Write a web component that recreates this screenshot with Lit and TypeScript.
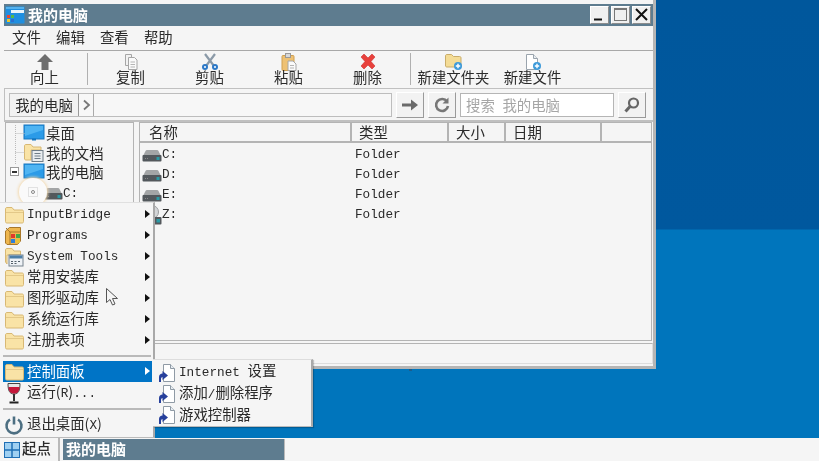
import { LitElement, html, css, svg, nothing } from "lit";
import { customElement } from "lit/decorators.js";

const svgIcon = (w: number, h: number, body: unknown) =>
  html`<svg class="ico" width=${w} height=${h} viewBox="0 0 ${w} ${h}">${body}</svg>`;

const folder = () =>
  svgIcon(21, 18, svg`<path d="M2.500 15.500V3c0-1 .5-1.500 1.500-1.500h5l2 2.500h8c1 0 1.500.5 1.500 1.500v10c0 1-.5 1.500-1.500 1.500H4c-1 0-1.500-.5-1.500-1.500z" fill="#f9e3a6" stroke="#d8b874"/><path d="M3 6.500h17" stroke="#e3c888"/>`);

const programs = () =>
  svgIcon(21, 20, svg`<path d="M2.500 17V5l4-3.500h11V15l-3 3.500H4z" fill="#eeb64e" stroke="#a8782a"/><path d="M7 6h11M7 6v12M7 6L3 2" stroke="#a8782a" fill="none"/><rect x="8" y="8" width="4" height="4" fill="#e03a2c"/><rect x="13" y="8" width="4" height="4" fill="#45a845"/><rect x="8" y="13" width="4" height="4" fill="#2f7fd6"/><rect x="13" y="13" width="4" height="4" fill="#e9c23a"/>`);

const sysTools = () =>
  svgIcon(21, 20, svg`<path d="M2.500 15V3c0-1 .5-1.500 1.500-1.500h5l2 2.500h6.500v4H4v9z" fill="#f9e3a6" stroke="#d8b874"/><rect x="6" y="8" width="14" height="11" fill="#eef2f6" stroke="#77838e"/><rect x="6.500" y="8.500" width="13" height="3" fill="#4d7fa8"/><path d="M8 14.500h2M11.500 14.500h2M15 14.500h2M8 16.500h2M11.500 16.500h2" stroke="#55606a"/>`);

const monitor = () =>
  svgIcon(22, 18, svg`<rect x="1" y="1" width="20" height="14" fill="#2b9be8" stroke="#1677c0"/><path d="M2 2h18v4L2 12z" fill="#4fb4f2"/><path d="M9 15.500h4" stroke="#1677c0" stroke-width="2"/>`);

const docFolder = () =>
  svgIcon(22, 20, svg`<path d="M1.500 16V3c0-1 .5-1.500 1.500-1.500h5l2 2.500h8v3H8v10H3c-1 0-1.500-.5-1.500-1.500z" fill="#f9e3a6" stroke="#d8b874"/><rect x="9" y="7.500" width="11" height="11" fill="#e9edf0" stroke="#6f7d88"/><path d="M11.500 10.500h6M11.500 13h6M11.500 15.500h6" stroke="#6f7d88"/>`);

const drive = () =>
  svgIcon(20, 13, svg`<path d="M1 7l2.500-5c.3-.6.8-1 1.500-1h10c.7 0 1.200.4 1.500 1L19 7z" fill="#a3a5a6"/><rect x="0.500" y="6" width="19" height="6.500" rx="1" fill="#53585c"/><rect x="14.500" y="8" width="3" height="3" fill="#2a9aa5"/><path d="M3 9.500h1M5 9.500h1" stroke="#888"/>`);

const cdDrive = () =>
  svgIcon(20, 20, svg`<circle cx="10" cy="7" r="6.500" fill="#d4d6d8" stroke="#9a9c9e"/><circle cx="10" cy="7" r="2" fill="#f5f5f5" stroke="#9a9c9e"/><rect x="4.500" y="12" width="15" height="7.500" rx="1" fill="#53585c"/><rect x="14.500" y="14" width="3.500" height="3.500" fill="#2a9aa5"/>`);

const shortcutDoc = () =>
  svgIcon(18, 20, svg`<path d="M5.500 1.500h7l4 4v13h-11z" fill="#fff" stroke="#8f9aa5"/><path d="M12.500 1.500v4h4" fill="#e8edf2" stroke="#8f9aa5"/><path d="M1 19v-5c0-2 1.500-3.500 3.500-3.500V8l5.500 4.500L4.500 17v-3c-1 0-1.500 1-1.500 2v3z" fill="#27409c"/>`);

const plusBadge = () => svg`<circle cx="14" cy="13" r="4" fill="#3d9ad9"/><path d="M14 10.800v4.400M11.800 13h4.400" stroke="#fff" stroke-width="1.400"/>`;

const TOOL_ICONS: Record<string, () => unknown> = {
  up: () => svgIcon(20, 18, svg`<path d="M10 1L2 9h4.500v8h7V9H18z" fill="#6e6e6e"/>`),
  copy: () => svgIcon(20, 18, svg`<path d="M4.500 1.500h6v11h-6z" fill="#f2f2f2" stroke="#a6a6a6"/><path d="M7.500 4.500h6l2.500 2.500v9.500H7.500z" fill="#fafafa" stroke="#a6a6a6"/><path d="M9.500 9h4.500M9.500 11.500h4.500M9.500 14h4.500" stroke="#b5b5b5"/>`),
  cut: () => svgIcon(20, 18, svg`<path d="M5 1l9 12M15 1L6 13" stroke="#8b9aa8" stroke-width="2.200"/><circle cx="5" cy="14" r="3" fill="#2d79c7"/><circle cx="15" cy="14" r="3" fill="#2d79c7"/><circle cx="5" cy="14" r="1" fill="#fff"/><circle cx="15" cy="14" r="1" fill="#fff"/>`),
  paste: () => svgIcon(20, 18, svg`<rect x="3" y="2.500" width="12" height="15" rx="1" fill="#eec173" stroke="#cf9f50"/><rect x="6.500" y="0.500" width="5" height="4" fill="#d9d9d9" stroke="#999"/><path d="M9 8h5l3 3v6.500H9z" fill="#fafafa" stroke="#a6a6a6"/><path d="M11 12.500h4M11 15h4" stroke="#b5b5b5"/>`),
  del: () => svgIcon(20, 18, svg`<path d="M3 4l3-3 4 4 4-4 3 3-4 4.500 4 4.500-3 3-4-4-4 4-3-3 4-4.500z" fill="#e8413c" stroke="#c33" stroke-width=".6"/>`),
  newfolder: () => svgIcon(20, 18, svg`<path d="M1.500 13V3c0-1 .5-1.500 1.500-1.500h4.500l2 2h6c1 0 1.500.5 1.500 1.500v7.500c0 1-.5 1.500-1.500 1.500H3c-1 0-1.500-.5-1.500-1.500z" fill="#f4dc96" stroke="#c9ad6a"/>${plusBadge()}`),
  newfile: () => svgIcon(20, 18, svg`<path d="M3.500 1.500h7l4 4v11h-11z" fill="#fff" stroke="#9aa4ad"/><path d="M10.500 1.500v4h4" fill="#e8edf2" stroke="#9aa4ad"/>${plusBadge()}`),
};

const wine = () =>
  svgIcon(21, 22, svg`<path d="M5 1.500h12c0 7-1.500 10.500-6 10.500S5 8.500 5 1.500z" fill="#e6e6e6" stroke="#444"/><path d="M5.500 5h11c-.2 4.500-2 6.500-5.500 6.500S5.700 9.500 5.500 5z" fill="#c4183a"/><path d="M11 12v7" stroke="#333" stroke-width="2"/><path d="M6.500 20.500h9" stroke="#222" stroke-width="2"/>`);

const power = () =>
  svgIcon(21, 20, svg`<path d="M7 4.500a7.500 7.500 0 1 0 8 0" fill="none" stroke="#4d6f82" stroke-width="2.600"/><path d="M11 1.500v8" stroke="#4d6f82" stroke-width="2.600"/>`);

const startLogo = () =>
  svgIcon(16, 16, svg`<rect x=".5" y=".5" width="15" height="15" fill="#9fd0f2" stroke="#1f6fb5"/><path d="M8 1v14M1 8h14" stroke="#1f6fb5" stroke-width="1.500"/>`);

const titleIcon = () =>
  svgIcon(20, 18, svg`<rect x=".5" y=".5" width="19" height="17" fill="#1f8fe0"/><path d="M6 4h13v3H6z" fill="#e9f4fb"/><path d="M1 1h18v2H1z" fill="#55b2ee"/><rect x="2" y="9" width="3" height="3" fill="#e9452f"/><rect x="6" y="9" width="3" height="3" fill="#58b947"/><rect x="2" y="13" width="3" height="3" fill="#e8c52e"/><rect x="6" y="13" width="3" height="3" fill="#2b6fcf"/>`);

const TOOLS = [
  { id: "up", label: "向上" },
  { sep: true },
  { id: "copy", label: "复制" },
  { id: "cut", label: "剪贴" },
  { id: "paste", label: "粘贴" },
  { id: "del", label: "删除" },
  { sep: true },
  { id: "newfolder", label: "新建文件夹" },
  { id: "newfile", label: "新建文件" },
];

const COLUMNS = [
  { label: "名称", w: 212 },
  { label: "类型", w: 97 },
  { label: "大小", w: 57 },
  { label: "日期", w: 96 },
  { label: "", w: 49 },
];

const ROWS = ["C:", "D:", "E:", "Z:"];

const MENU = [
  { icon: folder, label: "InputBridge", latin: true, arrow: true },
  { icon: programs, label: "Programs", latin: true, arrow: true },
  { icon: sysTools, label: "System Tools", latin: true, arrow: true },
  { icon: folder, label: "常用安装库", arrow: true },
  { icon: folder, label: "图形驱动库", arrow: true },
  { icon: folder, label: "系统运行库", arrow: true },
  { icon: folder, label: "注册表项", arrow: true },
];

@customElement("app-root")
export class AppRoot extends LitElement {
  static styles = css`
    :host {
      display: block;
      width: 819px;
      height: 461px;
      overflow: hidden;
      font-family: "Noto Sans CJK SC", "Liberation Sans", sans-serif;
      font-size: 14.400px;
      color: #2a2a2a;
    }
    .ico { display: block; flex: none; }
    .lat { font-family: "Liberation Mono", monospace; font-size: 12.700px; }
    .screen {
      position: relative;
      width: 819px;
      height: 461px;
      display: flex;
      flex-direction: column;
      background: #f5f5f5;
      filter: blur(0.35px);
    }
    .desktop {
      flex: none;
      height: 438px;
      background: linear-gradient(#00579c 0, #00589e 229px, #0075bc 230px, #0075bc 100%);
    }
    .speck {
      position: absolute;
      left: 409px;
      top: 369px;
      width: 3px;
      height: 2px;
      background: #1d5c8c;
    }

    .win {
      position: absolute;
      left: 0;
      top: 0;
      width: 656px;
      height: 369px;
      box-sizing: border-box;
      background: #f5f5f5;
      padding: 4px 0 0 4px;
      border-right: 3px solid #b5b5b5;
      border-bottom: 3px solid #b5b5b5;
      display: flex;
      flex-direction: column;
    }
    .title {
      flex: none;
      height: 22px;
      width: 649px;
      background: #5e7c8f;
      display: flex;
      align-items: center;
      padding-left: 1px;
      box-sizing: border-box;
      color: #fff;
      font-weight: 700;
      gap: 3px;
      font-size: 15px;
    }
    .title-text { flex: 1; line-height: 20px; }
    .wbtns { display: flex; gap: 2px; padding-right: 2px; }
    .wbtn {
      width: 19px;
      height: 18px;
      background: #f0f0f0;
      border: 1px solid;
      border-color: #fff #8c8c8c #8c8c8c #fff;
      box-sizing: border-box;
    }
    .menubar {
      flex: none;
      height: 25px;
      width: 649px;
      display: flex;
      align-items: center;
      gap: 15.200px;
      padding: 0 0 2px 8px;
      box-sizing: border-box;
      border-bottom: 1px solid #a8a8a8;
    }
    .menubar span { line-height: 18px; }
    .toolbar {
      flex: none;
      height: 37px;
      display: flex;
      align-items: flex-start;
      padding: 2px 0 0 1px;
      box-sizing: border-box;
    }
    .tool {
      width: 79px;
      flex: none;
      display: flex;
      flex-direction: column;
      align-items: center;
    }
    .tool span { line-height: 16px; margin-top: -2px; white-space: nowrap; }
    .tsep {
      width: 7px;
      flex: none;
      height: 32px;
      display: flex;
      justify-content: center;
    }
    .tsep i { display: block; width: 1px; height: 100%; background: #b0b0b0; margin-left: -1px; }
    .addr {
      flex: none;
      width: 649px;
      height: 34px;
      box-sizing: border-box;
      border: 1px solid #c0c0c0;
      border-width: 1px 0 2px 1px;
      display: flex;
      align-items: center;
      padding-left: 4px;
      gap: 4px;
    }
    .crumbs {
      width: 383px;
      height: 24px;
      flex: none;
      box-sizing: border-box;
      border: 1px solid #bdbdbd;
      background: #f7f7f7;
      display: flex;
    }
    .crumb {
      width: 69px;
      box-sizing: border-box;
      border-right: 1px solid #999;
      text-align: center;
      line-height: 22px;
      background: #f2f2f2;
      white-space: nowrap;
    }
    .crumb-arrow {
      width: 15px;
      box-sizing: border-box;
      border-right: 1px solid #aaa;
      display: flex;
      align-items: center;
      justify-content: center;
    }
    .abtn {
      width: 28px;
      height: 26px;
      flex: none;
      box-sizing: border-box;
      border: 1px solid;
      border-color: #fff #9a9a9a #9a9a9a #fff;
      background: #f2f2f2;
      display: flex;
      align-items: center;
      justify-content: center;
    }
    .search {
      width: 154px;
      height: 24px;
      flex: none;
      box-sizing: border-box;
      border: 1px solid #b5b5b5;
      background: #fff;
      color: #a6a6a6;
      padding-left: 5px;
      line-height: 22px;
      white-space: pre;
    }
    .panels {
      flex: none;
      height: 219px;
      display: flex;
      padding-left: 1px;
      gap: 5px;
    }
    .tree {
      width: 129px;
      flex: none;
      box-sizing: border-box;
      border: 1px solid #b4b4b4;
      position: relative;
      padding-top: 0.500px;
    }
    .tree-row {
      height: 19.500px;
      display: flex;
      align-items: center;
      padding-left: 17px;
      gap: 1px;
      white-space: nowrap;
    }
    .tree-row span { line-height: 18px; }
    .tree-row.drive-row { padding-left: 37px; gap: 0; margin-top: 2px; }
    .dots { position: absolute; left: 0; top: 0; }
    .expander {
      position: absolute;
      left: 4px;
      top: 44px;
      width: 9px;
      height: 9px;
      box-sizing: border-box;
      border: 1px solid #999;
      background: #fff;
      display: flex;
      align-items: center;
      justify-content: center;
    }
    .expander i { display: block; width: 5px; height: 2px; background: #333; }
    .ripple {
      position: absolute;
      left: 19px;
      top: 178px;
      width: 28px;
      height: 28px;
      box-sizing: border-box;
      border-radius: 50%;
      background: #fafafa;
      box-shadow: 0 0 3px 1px #f3d9ae;
      display: flex;
      align-items: center;
      justify-content: center;
    }
    .ripple i {
      display: block;
      width: 10px;
      height: 10px;
      box-sizing: border-box;
      border: 1px solid #e2e2e2;
      position: relative;
    }
    .ripple i::after {
      content: "";
      position: absolute;
      left: 2px;
      top: 2px;
      width: 4px;
      height: 4px;
      box-sizing: border-box;
      border: 1px solid #888;
      border-radius: 50%;
    }
    .list {
      width: 513px;
      flex: none;
      box-sizing: border-box;
      border: 1px solid #b4b4b4;
      display: flex;
      flex-direction: column;
    }
    .lhead {
      display: flex;
      height: 18px;
      flex: none;
      border-bottom: 2px solid #b4b4b4;
    }
    .lhead div {
      box-sizing: border-box;
      border-right: 2px solid #b4b4b4;
      padding-left: 7px;
      line-height: 17px;
    }
    .lhead div:first-child { padding-left: 9px; }
    .lhead div:last-child { border-right: 0; }
    .lrows { padding-top: 2px; }
    .lrow {
      height: 20px;
      display: flex;
      align-items: center;
    }
    .lrow .name { width: 212px; display: flex; align-items: center; padding-left: 2px; box-sizing: border-box; }
    .lrow .lat { display: block; line-height: 20px; }
    .lrow .kind { padding-left: 3px; }

    .status {
      flex: none;
      width: 648px;
      height: 21px;
      margin: 2px 0 0 1px;
      box-sizing: border-box;
      border-top: 1px solid #b4b4b4;
      border-right: 1px solid #ddd;
      border-bottom: 1px solid #ddd;
    }

    .menu {
      position: absolute;
      background: #f5f5f5;
      box-sizing: border-box;
      border-right: 2px solid #a9a9a9;
      border-bottom: 1px solid #bbb;
    }
    .start {
      left: 0;
      top: 202px;
      width: 155px;
      height: 236px;
      padding: 1px 1px 0 3px;
      border-top: 1px solid #e0e0e0;
    }
    .submenu {
      left: 153px;
      top: 359px;
      width: 160px;
      height: 68px;
      padding: 2px 2px 0 5px;
      box-shadow: 1px 1px 1px #0003;
      border-top: 1px solid #ddd;
    }
    .mi {
      height: 21px;
      display: flex;
      align-items: center;
      gap: 3px;
      position: relative;
      white-space: pre;
    }
    .mi > span { line-height: 18px; margin-bottom: 3px; }
    .mi > span.lat { margin-bottom: 0; }
    .mi.low > span { margin-bottom: 1px; }
    .mi.sel { background: #0074c6; color: #fff; }
    .arrow {
      position: absolute;
      right: 2px;
      top: 6px;
      width: 0;
      height: 0;
      border-left: 5px solid #111;
      border-top: 4.500px solid transparent;
      border-bottom: 4.500px solid transparent;
    }
    .sel .arrow { border-left-color: #fff; }
    .msep { height: 2px; background: #b9b9b9; margin: 4px 1px 4px 0; }
    .msep.after { margin: 5px 1px 4px 0; }
    .cursor { position: absolute; left: 105px; top: 287px; }

    .taskbar {
      flex: none;
      height: 23px;
      display: flex;
      align-items: stretch;
    }
    .startbtn {
      width: 60px;
      box-sizing: border-box;
      display: flex;
      align-items: center;
      gap: 2px;
      padding-left: 4px;
      border-right: 2px solid #b9b9b9;
      font-weight: 500;
    }
    .startbtn span { line-height: 18px; margin-bottom: 3px; }
    .task {
      width: 222px;
      margin: 1px 0 1px 3px;
      background: #5e7c8f;
      color: #fff;
      font-weight: 700;
      font-size: 15px;
      line-height: 19px;
      padding-left: 3px;
      box-sizing: border-box;
      border-right: 1px solid #b9b9b9;
    }
  `;

  private txt(s: string) {
    return html`<span class="lat">${s}</span>`;
  }

  private renderWindow() {
    return html`<section class="win">
      <div class="title">
        ${titleIcon()}<span class="title-text">我的电脑</span>
        <div class="wbtns">
          <div class="wbtn">${svgIcon(17, 16, svg`<path d="M3 12.500h8" stroke="#111" stroke-width="2"/>`)}</div>
          <div class="wbtn">${svgIcon(17, 16, svg`<rect x="2.500" y="1.500" width="12" height="12" fill="none" stroke="#777"/><path d="M2.500 2h12" stroke="#777" stroke-width="2"/>`)}</div>
          <div class="wbtn">${svgIcon(17, 16, svg`<path d="M3 2l11 11M14 2L3 13" stroke="#111" stroke-width="2"/>`)}</div>
        </div>
      </div>
      <div class="menubar">
        <span>文件</span><span>编辑</span><span>查看</span><span>帮助</span>
      </div>
      <div class="toolbar">
        ${TOOLS.map((t) =>
          t.sep
            ? html`<div class="tsep"><i></i></div>`
            : html`<div class="tool">${TOOL_ICONS[t.id!]()}<span>${t.label}</span></div>`
        )}
      </div>
      <div class="addr">
        <div class="crumbs">
          <div class="crumb">我的电脑</div>
          <div class="crumb-arrow">${svgIcon(9, 12, svg`<path d="M2 1.500L7 6l-5 4.500" fill="none" stroke="#777" stroke-width="1.800"/>`)}</div>
        </div>
        <div class="abtn">${svgIcon(18, 16, svg`<path d="M1 6.500h9V2.500l7 5.500-7 5.500V9.500H1z" fill="#6a6a6a"/>`)}</div>
        <div class="abtn">${svgIcon(18, 18, svg`<path d="M14 5.500A6 6 0 1 0 15 10" fill="none" stroke="#777" stroke-width="2.600"/><path d="M15.500 1.500v6h-6z" fill="#777"/>`)}</div>
        <div class="search">搜索<span class="lat"> </span>我的电脑</div>
        <div class="abtn">${svgIcon(18, 18, svg`<circle cx="10.500" cy="7" r="4.500" fill="none" stroke="#666" stroke-width="2.200"/><path d="M7 10.500L2.500 15.500" stroke="#666" stroke-width="3"/>`)}</div>
      </div>
      <div class="panels">
        <div class="tree">
          <svg class="dots" width="30" height="60">
            <path d="M9.500 2v40M9.500 10.500h9M9.500 29.500h9" stroke="#bbb" stroke-dasharray="1 1" fill="none"/>
          </svg>
          <div class="tree-row">${monitor()}<span>桌面</span></div>
          <div class="tree-row">${docFolder()}<span>我的文档</span></div>
          <div class="tree-row">${monitor()}<span>我的电脑</span></div>
          <div class="tree-row drive-row">${drive()}${this.txt("C:")}</div>
          <div class="expander"><i></i></div>
        </div>
        <div class="list">
          <div class="lhead">
            ${COLUMNS.map((c) => html`<div style="width:${c.w}px">${c.label}</div>`)}
          </div>
          <div class="lrows">
            ${ROWS.map(
              (r) => html`<div class="lrow">
                <div class="name">${r === "Z:" ? cdDrive() : drive()}${this.txt(r)}</div>
                <div class="kind">${this.txt("Folder")}</div>
              </div>`
            )}
          </div>
        </div>
      </div>
      <div class="status"></div>
    </section>`;
  }

  private renderMenus() {
    return html`<div class="ripple"><i></i></div>
      <nav class="menu start">
        ${MENU.map(
          (m) => html`<div class="mi">
            ${m.icon()}<span class=${m.latin ? "lat" : ""}>${m.label}</span>
            ${m.arrow ? html`<i class="arrow"></i>` : nothing}
          </div>`
        )}
        <div class="msep"></div>
        <div class="mi sel low">${folder()}<span>控制面板</span><i class="arrow"></i></div>
        <div class="mi low">${wine()}<span>运行(<span class="lat">R</span>)<span class="lat">...</span></span></div>
        <div class="msep after"></div>
        <div class="mi low">${power()}<span>退出桌面(<span class="lat">X</span>)</span></div>
      </nav>
      <nav class="menu submenu">
        <div class="mi">${shortcutDoc()}<span><span class="lat">Internet </span>设置</span></div>
        <div class="mi low">${shortcutDoc()}<span>添加<span class="lat">/</span>删除程序</span></div>
        <div class="mi low">${shortcutDoc()}<span>游戏控制器</span></div>
      </nav>
      <div class="cursor">
        ${svgIcon(14, 20, svg`<path d="M1.500 1.500v14l3.500-3 2.500 5.500 2.500-1-2.500-5.500h5z" fill="#f5f5f5" stroke="#555"/>`)}
      </div>`;
  }

  render() {
    return html`<div class="screen">
      <div class="desktop"></div>
      <div class="taskbar">
        <div class="startbtn">${startLogo()}<span>起点</span></div>
        <div class="task">我的电脑</div>
      </div>
      ${this.renderWindow()}
      <i class="speck"></i>
      ${this.renderMenus()}
    </div>`;
  }
}
